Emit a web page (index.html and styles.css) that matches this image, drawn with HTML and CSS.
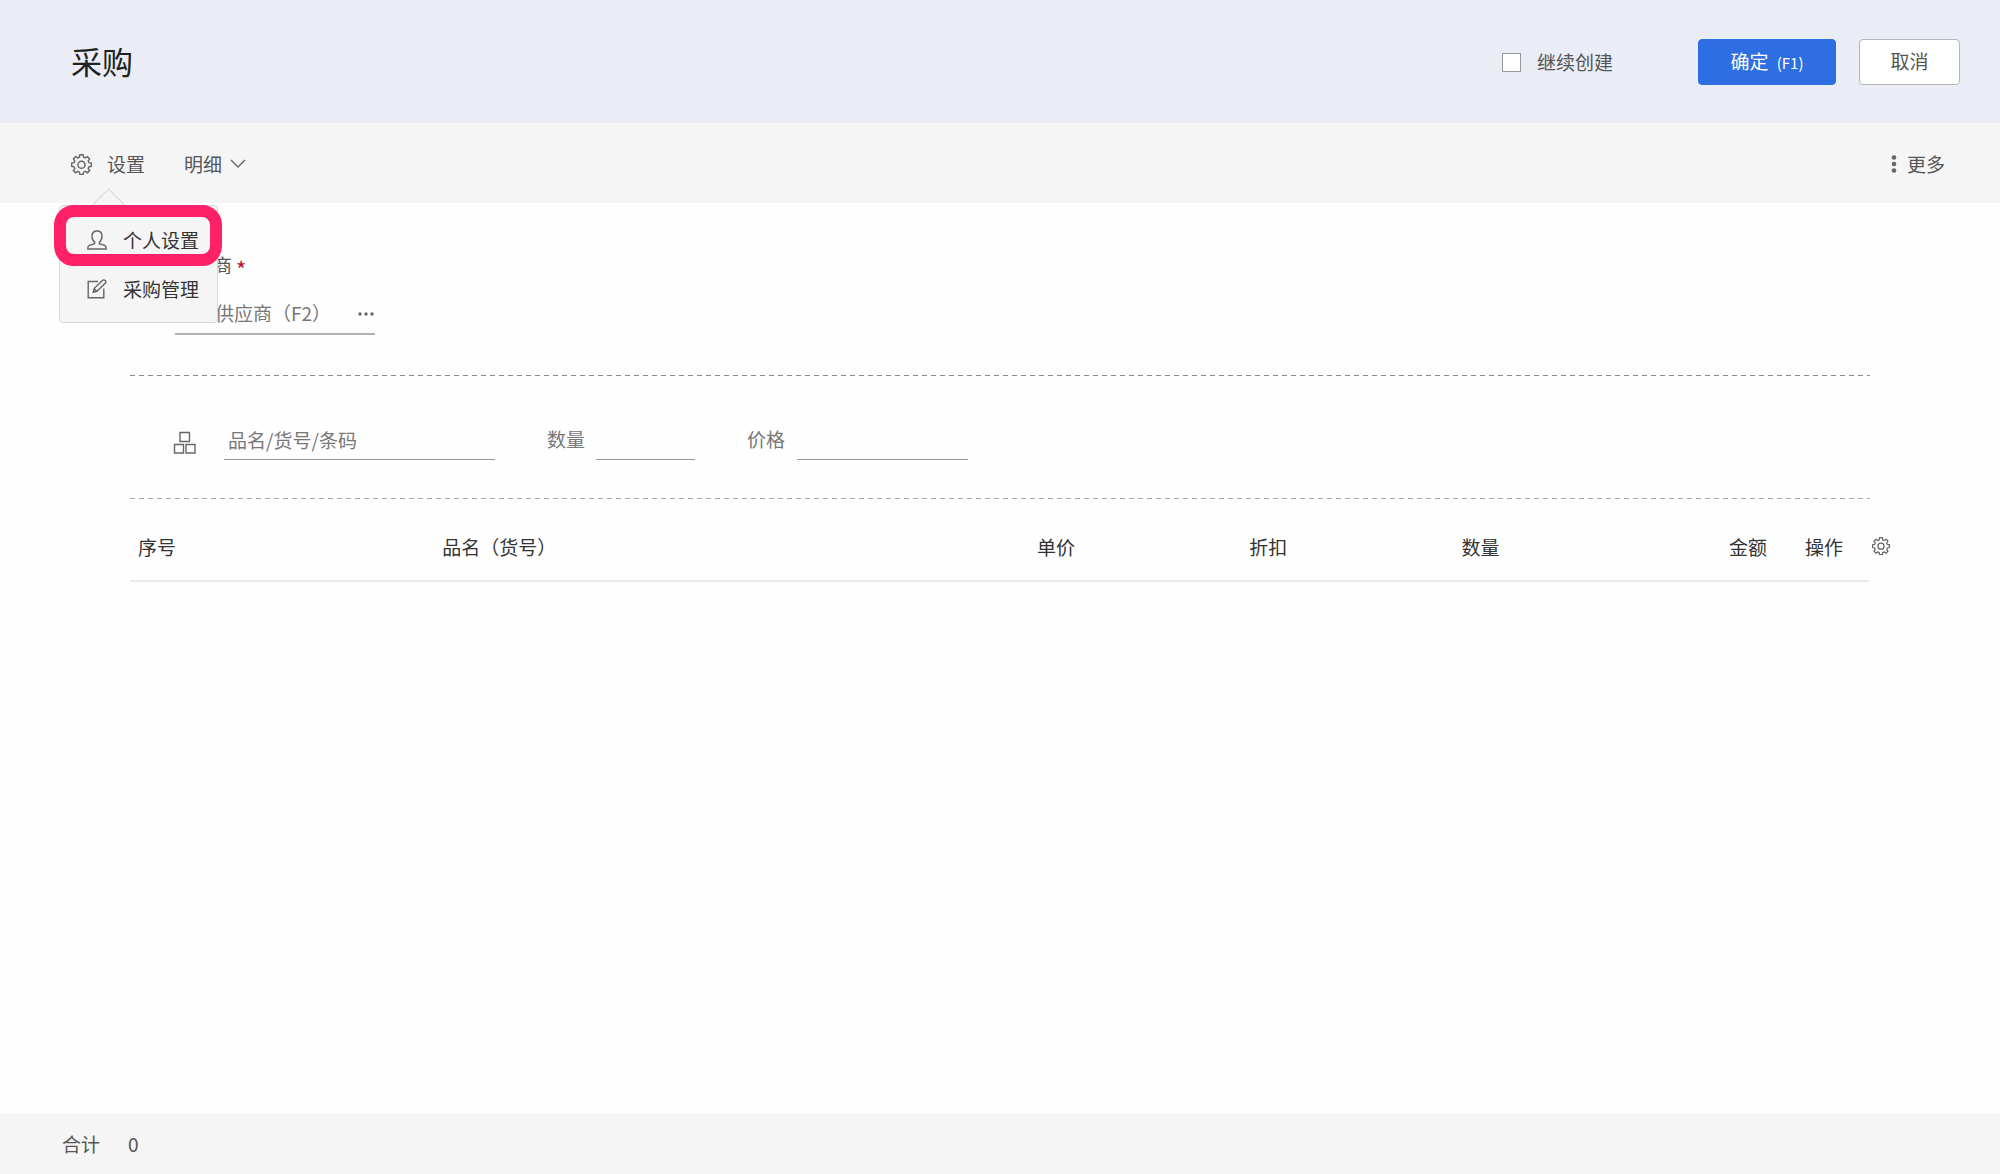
FILE: index.html
```
<!DOCTYPE html>
<html lang="zh-CN">
<head>
  <meta charset="UTF-8">
  <title>采购</title>
  <link rel="stylesheet" href="styles.css">
</head>
<body>

  <svg class="sprite" aria-hidden="true">
    <symbol id="gear" viewBox="0 0 20 20">
      <path d="M8.5 .8h3l.5 2.3 1.6.7 2-1.3 2.1 2.1-1.3 2 .7 1.6 2.3.5v3l-2.3.5-.7 1.6 1.3 2-2.1 2.1-2-1.3-1.6.7-.5 2.3h-3L8 17.3l-1.6-.7-2 1.3-2.1-2.1 1.3-2-.7-1.6-2.3-.5v-3l2.3-.5.7-1.6-1.3-2 2.1-2.1 2 1.3L8 3.1z"/>
      <circle cx="10" cy="10.2" r="3.4"/>
    </symbol>
  </svg>

  <!-- 标题栏 -->
  <header class="header">
    <h1>采购</h1>
    <label class="keep"><input type="checkbox"> 继续创建</label>
    <button type="button" class="btn btn-primary">确定 <small>(F1)</small></button>
    <button type="button" class="btn">取消</button>
  </header>

  <!-- 工具栏 -->
  <nav class="toolbar">
    <div class="settings">
      <button type="button" class="tool tool-settings">
        <svg class="icon" width="21" height="21"><use href="#gear"/></svg>
        设置
      </button>
      <ul class="menu">
        <li>
          <a href="#">
            <svg class="icon" width="20" height="20" viewBox="0 0 20 20"><path d="M7.600 12.200C5.900 10.800 5 8.800 5 6.200 5 3 7 1 10 1s5 2 5 5.200c0 2.600-.9 4.600-2.600 6v1.500l5.200 1.600c1 .4 1.500 1.200 1.500 2.200v1.500H.9v-1.500c0-1 .5-1.800 1.500-2.200l5.200-1.600z"/></svg>
            个人设置
          </a>
          <span class="mark"></span>
        </li>
        <li>
          <a href="#">
            <svg class="icon" width="20" height="20" viewBox="0 0 20 20"><path d="M11 2.500H1.200v16.300h15.600V9.500M6.300 13.200l.8-3.600 8.300-8.100c.8-.8 2-.8 2.800 0s.8 1.900 0 2.700l-8.300 8.100zM7.200 9.700l2.600 2.500"/></svg>
            采购管理
          </a>
        </li>
      </ul>
    </div>
    <button type="button" class="tool">
      明细
      <svg class="icon" width="16" height="10" viewBox="0 0 16 10"><path d="M1 1l7 7 7-7"/></svg>
    </button>
    <button type="button" class="tool tool-more">
      <svg class="dots" width="6" height="18" viewBox="0 0 6 18"><circle cx="3" cy="2.500" r="2.300"/><circle cx="3" cy="9" r="2.300"/><circle cx="3" cy="15.500" r="2.300"/></svg>
      更多
    </button>
  </nav>

  <main class="content">
    <!-- 供应商 -->
    <div class="supplier">
      <label for="supplier">供应商<span class="required">*</span></label>
      <div class="picker">
        <input type="text" id="supplier" placeholder="选择供应商（F2）">
        <button type="button" aria-label="选择供应商">
          <svg class="dots" width="18" height="6" viewBox="0 0 18 6"><circle cx="3" cy="4" r="1.700"/><circle cx="9" cy="4" r="1.700"/><circle cx="15" cy="4" r="1.700"/></svg>
        </button>
      </div>
    </div>

    <hr class="dashed dark">

    <!-- 录入商品 -->
    <div class="entry">
      <svg class="icon boxes" width="24" height="24" viewBox="0 0 24 24"><path d="M7 1.500h9.500v9H7zM1.500 13.500h9v8.500h-9zM13 13.500h9v8.500h-9z"/></svg>
      <input type="text" class="line goods" placeholder="品名/货号/条码" aria-label="品名/货号/条码">
      <label for="qty">数量</label>
      <input type="text" id="qty" class="line qty">
      <label for="price">价格</label>
      <input type="text" id="price" class="line price">
    </div>

    <hr class="dashed">

    <!-- 明细表 -->
    <div class="detail">
      <table>
        <thead>
          <tr>
            <th class="col-no">序号</th>
            <th class="col-name">品名（货号）</th>
            <th class="col-num">单价</th>
            <th class="col-num">折扣</th>
            <th class="col-num">数量</th>
            <th class="col-sum">金额</th>
            <th class="col-op">操作</th>
          </tr>
        </thead>
      </table>
      <button type="button" class="columns" aria-label="列设置">
        <svg class="icon" width="18" height="18"><use href="#gear"/></svg>
      </button>
    </div>
  </main>

  <!-- 合计 -->
  <footer class="footer">
    <span>合计</span>
    <span>0</span>
  </footer>

</body>
</html>
```
FILE: styles.css
```
* {
  box-sizing: border-box;
}
body {
  margin: 0;
  min-height: 100vh;
  display: flex;
  flex-direction: column;
  font-family: "Noto Sans CJK SC", sans-serif;
  font-size: 19px;
  line-height: 24px;
  color: #555;
  background: #fefefe;
}
button, input {
  font: inherit;
  color: inherit;
  padding: 0;
  border: 0;
  background: none;
}
button {
  cursor: pointer;
}
.sprite {
  position: absolute;
  width: 0;
  height: 0;
}
.icon {
  flex: none;
  fill: none;
  stroke: #666;
  stroke-width: 1.4;
}
.dots {
  flex: none;
  fill: #666;
}

/* 标题栏 */
.header {
  display: flex;
  align-items: center;
  padding: 39px 40px 38px 71px;
  background: #eaedf5;
}
.header h1 {
  margin: 0 auto 0 0;
  padding-bottom: 2px;
  font-size: 31px;
  line-height: 40px;
  font-weight: 400;
  color: #222;
}
.keep {
  display: flex;
  align-items: center;
  gap: 16px;
  margin-right: 85px;
}
.keep input {
  appearance: none;
  width: 19px;
  height: 19px;
  margin: 0;
  border: 1px solid #999;
  background: #fff;
}
.keep input:checked {
  background: #2d6fe3;
}
.btn {
  min-width: 101px;
  height: 46px;
  padding-bottom: 2px;
  border: 1px solid #b5b5b5;
  border-radius: 4px;
  background: #fff;
}
.btn-primary {
  min-width: 138px;
  margin-right: 23px;
  padding: 0;
  border-color: #2d6fe3;
  background: #2d6fe3;
  color: #fff;
}
.btn small {
  margin-left: 4px;
  font-size: 15px;
}

/* 工具栏 */
.toolbar {
  display: flex;
  gap: 39px;
  padding: 29px 55px 27px 71px;
  background: #f5f5f5;
}
.tool {
  display: flex;
  align-items: center;
  gap: 8px;
}
.tool-settings {
  gap: 15px;
}
.tool-more {
  gap: 10px;
  margin-left: auto;
}
.settings {
  position: relative;
}
.menu {
  position: absolute;
  top: 53px;
  left: -12px;
  z-index: 1;
  width: 159px;
  margin: 0;
  padding: 9px 0;
  list-style: none;
  border: 1px solid #d8d8d8;
  border-radius: 4px;
  background: #f5f5f5;
}
.menu::before {
  content: "";
  position: absolute;
  top: -13px;
  left: 37px;
  width: 22px;
  height: 22px;
  border: solid #d8d8d8;
  border-width: 1px 0 0 1px;
  background: #f5f5f5;
  transform: rotate(45deg);
}
.menu li {
  position: relative;
}
.menu a {
  position: relative;
  display: flex;
  align-items: center;
  gap: 16px;
  height: 49px;
  padding-left: 27px;
  color: #333;
  text-decoration: none;
}
.mark {
  position: absolute;
  inset: -10px -5px -2px -6px;
  border: 12px solid #ff2167;
  border-radius: 20px;
  pointer-events: none;
}

/* 表单 */
.content {
  flex: 1;
  padding: 50px 110px 0 130px;
}
.supplier {
  padding-left: 45px;
}
.supplier label {
  display: block;
  margin-bottom: 24px;
}
.required {
  margin-left: 4px;
  font-size: 22px;
  line-height: 0;
  vertical-align: -5px;
  color: #c01020;
}
.picker {
  display: flex;
  width: 200px;
  padding-bottom: 8px;
  border-bottom: 2px solid #b0b0b0;
}
.picker input {
  flex: 1;
  min-width: 0;
  height: 24px;
  padding-left: 2px;
}
.picker button {
  display: flex;
  align-items: center;
}
input::placeholder {
  color: #777;
  opacity: 1;
}
.dashed {
  height: 1px;
  margin: 40px 20px 0 0;
  border: 0;
  background: repeating-linear-gradient(to right, #aaa 0 5px, transparent 5px 9px);
}
.dashed.dark {
  background: repeating-linear-gradient(to right, #888 0 5px, transparent 5px 9px);
}
.entry {
  display: flex;
  align-items: flex-start;
  margin: 51px 0 -2px;
  padding-left: 42px;
  color: #777;
}
.boxes {
  margin: 4px 27px 0 1px;
}
.line {
  height: 33px;
  padding: 0 4px 8px;
  border-bottom: 1px solid #999;
}
.goods {
  width: 271px;
  margin-right: 52px;
}
.qty {
  width: 99px;
  margin: 0 52px 0 11px;
}
.price {
  width: 171px;
  margin-left: 12px;
}

/* 明细表 */
.detail {
  display: flex;
  align-items: flex-start;
  gap: 3px;
}
.detail table {
  flex: 1;
  table-layout: fixed;
  border-collapse: collapse;
  color: #333;
}
.detail th {
  padding: 36px 8px 21px;
  border-bottom: 2px solid #eaeaea;
  font-weight: 400;
  text-align: left;
}
.col-no {
  width: 17.5%;
}
.col-num {
  width: 12.2%;
}
.detail .col-sum {
  width: 6.3%;
  text-align: right;
}
.detail .col-op {
  width: 5.4%;
  padding-right: 26px;
  text-align: right;
}
.columns {
  display: flex;
  margin-top: 38px;
}

/* 合计 */
.footer {
  display: flex;
  gap: 28px;
  padding: 18px 62px;
  background: #f5f5f5;
}
```
